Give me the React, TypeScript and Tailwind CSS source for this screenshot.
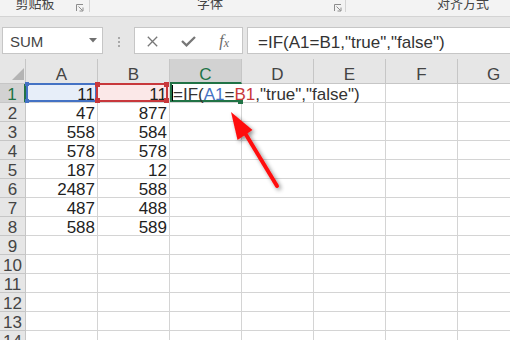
import React from 'react';

const COLS = ['A', 'B', 'C', 'D', 'E', 'F', 'G'];
const A = [11, 47, 558, 578, 187, 2487, 487, 588];
const B = [11, 877, 584, 578, 12, 588, 488, 589];
const ROWS = 14;

function Launcher() {
  return (
    <svg width="8" height="8" viewBox="0 0 8 8" className="block">
      <path d="M0.5 7 V0.5 H7" fill="none" stroke="#8c8c8c" strokeWidth="1" />
      <path d="M2.5 2.5 L6.5 6.5 M7 3.5 V7 H3.5" fill="none" stroke="#8c8c8c" strokeWidth="1" />
    </svg>
  );
}

const cellBase =
  'w-[72px] shrink-0 h-[19px] border-r border-b border-[#d4d4d4] text-right pr-[2px] text-[17px] leading-[17px] pt-[2px] text-[#1f1f1f] whitespace-nowrap';

export default function App() {
  return (
    <div className="relative w-[510px] h-[340px] overflow-hidden bg-white font-['Liberation_Sans_Narrow','Liberation_Sans',sans-serif]">
      {/* ribbon group labels */}
      <div className="flex h-[17px] bg-[#f3f3f3] border-b border-[#d4d4d4] overflow-hidden font-['Noto_Sans_CJK_SC',sans-serif] text-[13px] text-[#444]">
        <div className="flex w-[90px] shrink-0 h-[12px] border-r border-[#d4d4d4]">
          <div className="w-[70px] text-center leading-[13px] -mt-[4px]">剪贴板</div>
          <div className="flex-1 flex justify-center pt-[4px]">
            <Launcher />
          </div>
        </div>
        <div className="flex w-[256px] shrink-0 h-[12px] border-r border-[#d4d4d4]">
          <div className="w-[240px] text-center leading-[13px] -mt-[4px]">字体</div>
          <div className="flex-1 flex justify-center pt-[4px]">
            <Launcher />
          </div>
        </div>
        <div className="flex-1 pl-[91px] leading-[13px] -mt-[4px] whitespace-nowrap">对齐方式</div>
      </div>

      {/* formula bar */}
      <div className="flex items-start h-[42px] bg-[#e6e6e6] pt-[10px]">
        <div className="ml-[2px] w-[101px] h-[27px] shrink-0 bg-white border border-[#c6c6c6] flex items-start pl-[7px] pr-[5px]">
          <span className="flex-1 text-[15px] leading-[17px] pt-[5px] text-[#444]">SUM</span>
          <svg width="8" height="5" viewBox="0 0 8 5" className="mt-[10px]">
            <path d="M0 0 H8 L4 4.5 Z" fill="#707070" />
          </svg>
        </div>
        <div className="w-[31px] h-[27px] shrink-0 flex flex-col items-center justify-center gap-[2px] pt-[2px]">
          <div className="w-[2px] h-[2px] bg-[#a8a8a8]" />
          <div className="w-[2px] h-[2px] bg-[#a8a8a8]" />
          <div className="w-[2px] h-[2px] bg-[#a8a8a8]" />
        </div>
        <div className="w-[109px] h-[27px] shrink-0 bg-white border border-[#c6c6c6] flex">
          <div className="w-[36px] flex items-center justify-center pt-[2px]">
            <svg width="11" height="11" viewBox="0 0 11 11">
              <path d="M0.8 0.8 L10.2 10.2 M10.2 0.8 L0.8 10.2" stroke="#777" strokeWidth="1.3" fill="none" />
            </svg>
          </div>
          <div className="w-[36px] flex items-center justify-center pt-[2px]">
            <svg width="15" height="11" viewBox="0 0 15 11">
              <path d="M1 5 L5.5 9.3 L14 1" stroke="#777" strokeWidth="2.3" fill="none" />
            </svg>
          </div>
          <div className="w-[36px] flex items-center justify-center text-[#6a6a6a] font-['Liberation_Serif',serif] italic pt-[1px]">
            <span className="text-[16px] leading-none">f</span>
            <span className="text-[12px] leading-none mt-[3px]">x</span>
          </div>
        </div>
        <div className="ml-[4px] flex-1 h-[27px] bg-white border border-r-0 border-[#c6c6c6] pl-[10px] text-[17px] leading-[19px] pt-[5px] text-[#333] whitespace-nowrap">
          =IF(A1=B1,"true","false")
        </div>
      </div>

      {/* column headers */}
      <div className="flex h-[25px]">
        <div className="relative w-[26px] shrink-0 h-[25px] bg-[#e6e6e6] border-r border-b border-[#c6c6c6]">
          <svg width="12" height="12" viewBox="0 0 12 12" className="absolute right-[1px] bottom-[3px]">
            <polygon points="12,0 12,12 0,12" fill="#b4b4b4" />
          </svg>
        </div>
        {COLS.map((c) =>
          c === 'C' ? (
            <div
              key={c}
              className="w-[72px] shrink-0 h-[25px] bg-[#d2d2d2] border-r border-[#c6c6c6] border-b-2 border-b-[#217346] text-center text-[17px] leading-[19px] pt-[6px] text-[#217346]"
            >
              {c}
            </div>
          ) : (
            <div
              key={c}
              className="w-[72px] shrink-0 h-[25px] bg-[#e6e6e6] border-r border-b border-[#c6c6c6] text-center text-[17px] leading-[19px] pt-[6px] text-[#444]"
            >
              {c}
            </div>
          )
        )}
      </div>

      {/* row 1 */}
      <div className="flex h-[19px]">
        <div className="w-[26px] shrink-0 h-[19px] bg-[#d2d2d2] border-b border-[#c6c6c6] border-r-2 border-r-[#217346] text-center text-[17px] leading-[17px] pt-[2px] text-[#217346]">
          1
        </div>
        <div className={cellBase + ' relative bg-[#e7eef9]'}>
          11
          <div className="absolute left-0 top-[-1px] right-0 bottom-0 border-2 border-[#4472c4]">
            <div className="absolute left-[-3px] top-[-3px] w-[4px] h-[4px] bg-[#4472c4]" />
            <div className="absolute left-[-3px] bottom-[-3px] w-[4px] h-[4px] bg-[#4472c4]" />
          </div>
        </div>
        <div className={cellBase + ' relative bg-[#fbe8e8]'}>
          11
          <div className="absolute left-[-2px] top-[-1px] right-[1px] bottom-0 border-2 border-[#c8383c]">
            <div className="absolute left-[-3px] top-[-3px] w-[5px] h-[5px] bg-[#c8383c]" />
            <div className="absolute right-[-3px] top-[-3px] w-[5px] h-[5px] bg-[#c8383c]" />
            <div className="absolute left-[-3px] bottom-[-3px] w-[5px] h-[5px] bg-[#c8383c]" />
            <div className="absolute right-[-3px] bottom-[-3px] w-[5px] h-[5px] bg-[#c8383c]" />
          </div>
        </div>
        <div className="relative w-[72px] shrink-0 h-[19px] border-r border-r-transparent border-b border-b-[#d4d4d4]">
          <div className="absolute left-0 top-[-1px] right-[1px] bottom-0 border-l-2 border-b-2 border-[#217346]">
            <div className="absolute right-[-3px] bottom-[-4px] w-[5px] h-[5px] bg-[#217346]" />
          </div>
          <div className="absolute left-[2px] top-[1px] w-[1px] h-[16px] bg-black" />
          <div className="absolute left-[3px] top-0 pt-[2px] text-[17px] leading-[17px] whitespace-nowrap text-[#333] z-10">
            =IF(<span className="text-[#4472c4]">A1</span>=<span className="text-[#c8383c]">B1</span>,"true","false")
          </div>
        </div>
        <div className="w-[72px] shrink-0 h-[19px] border-r border-r-transparent border-b border-b-[#d4d4d4]" />
        <div className={cellBase} />
        <div className={cellBase} />
        <div className={cellBase} />
      </div>

      {/* rows 2..14 */}
      {Array.from({ length: ROWS - 1 }, (_, i) => {
        const r = i + 2;
        return (
          <div key={r} className="flex h-[19px]">
            <div className="w-[26px] shrink-0 h-[19px] bg-[#e6e6e6] border-r border-b border-[#c6c6c6] text-center text-[17px] leading-[17px] pt-[2px] text-[#444]">
              {r}
            </div>
            <div className={cellBase}>{A[r - 1] ?? ''}</div>
            <div className={cellBase}>{B[r - 1] ?? ''}</div>
            <div className={cellBase} />
            <div className={cellBase} />
            <div className={cellBase} />
            <div className={cellBase} />
            <div className={cellBase} />
          </div>
        );
      })}

      {/* red arrow annotation */}
      <svg className="absolute left-0 top-0 pointer-events-none" width="510" height="340">
        <defs>
          <filter id="sh" x="-50%" y="-50%" width="200%" height="200%">
            <feDropShadow dx="2" dy="2" stdDeviation="2" floodColor="#000" floodOpacity="0.45" />
          </filter>
        </defs>
        <g filter="url(#sh)">
          <line x1="245" y1="133" x2="277" y2="186" stroke="#ff1010" strokeWidth="4" strokeLinecap="round" />
          <polygon points="231,112 252.5,130 237.5,140" fill="#ff1010" />
        </g>
      </svg>
    </div>
  );
}
